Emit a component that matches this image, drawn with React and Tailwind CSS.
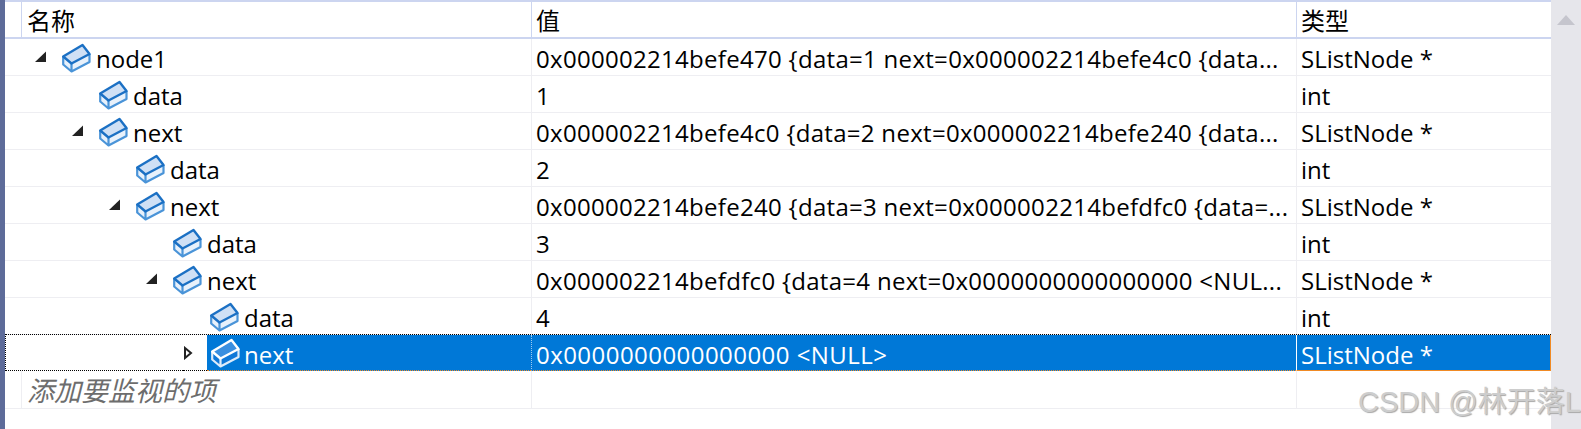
const rows = [
  { name: "node1", value: "0x000002214befe470 {data=1 next=0x000002214befe4c0 {data...", type: "SListNode *", indent: "pl-[29px]", arrow: "open" },
  { name: "data", value: "1", type: "int", indent: "pl-[66px]" },
  { name: "next", value: "0x000002214befe4c0 {data=2 next=0x000002214befe240 {data...", type: "SListNode *", indent: "pl-[66px]", arrow: "open" },
  { name: "data", value: "2", type: "int", indent: "pl-[103px]" },
  { name: "next", value: "0x000002214befe240 {data=3 next=0x000002214befdfc0 {data=...", type: "SListNode *", indent: "pl-[103px]", arrow: "open" },
  { name: "data", value: "3", type: "int", indent: "pl-[140px]" },
  { name: "next", value: "0x000002214befdfc0 {data=4 next=0x0000000000000000 <NUL...", type: "SListNode *", indent: "pl-[140px]", arrow: "open" },
  { name: "data", value: "4", type: "int", indent: "pl-[177px]" },
];

function Cube({ selected }) {
  const stroke = selected ? "#ffffff" : "#1b70c4";
  const light = selected ? "#dcebfa" : "#4a94d8";
  const top = selected ? "#3a8fe0" : "#cfe0f5";
  const side = selected ? "#0f78d8" : "#e8f1fb";
  return (
    <svg width="30" height="30" viewBox="0 0 30 30" className="shrink-0 -mt-[1px] overflow-visible">
      <path d="M2.2 14.5 L21.5 3 L28.5 12 L10.5 21.5 Z" fill={top} />
      <path d="M2.2 14.5 L10.5 21.5 L10.5 29.5 L2.2 22.5 Z" fill={side} />
      <path d="M10.5 21.5 L28.5 12 L28.5 20 L10.5 29.5 Z" fill={side} />
      <path d="M2.2 14.5 L2.2 22.5 L10.5 29.5 L28.5 20 L28.5 12 M10.5 21.5 L10.5 29.5" fill="none" stroke={light} strokeWidth="2.2" strokeLinejoin="round" />
      <path d="M2.2 14.5 L21.5 3 L28.5 12 L10.5 21.5 Z" fill="none" stroke={stroke} strokeWidth="2.4" strokeLinejoin="round" />
    </svg>
  );
}

function Arrow({ kind }) {
  if (kind === "open") {
    return (
      <svg width="13" height="12" viewBox="0 0 13 12" className="shrink-0">
        <path d="M1 11 L12 0.5 L12 11 Z" fill="#222222" />
      </svg>
    );
  }
  return (
    <svg width="10" height="14" viewBox="0 0 10 14" className="shrink-0">
      <path d="M2 2 L8 7 L2 12 Z" fill="#ffffff" stroke="#222222" strokeWidth="2" />
    </svg>
  );
}

function Row({ row }) {
  return (
    <div className="grid grid-cols-[526px_765px_255px] h-[37px] border-b border-[#eeeef2] text-[24px] leading-[28px] text-black">
      <div className={`flex items-center ${row.indent}`}>
        <span className="w-[27px] shrink-0 flex">{row.arrow && <Arrow kind={row.arrow} />}</span>
        <Cube />
        <span className="ml-[5px] pt-[4px]">{row.name}</span>
      </div>
      <div className="flex items-center pl-[4px] pt-[4px] border-l border-[#eeeef2] whitespace-nowrap overflow-hidden tracking-[0.3px]">{row.value}</div>
      <div className="flex items-center pl-[4px] pt-[4px] border-l border-[#eeeef2]">{row.type}</div>
    </div>
  );
}

export default function App() {
  return (
    <div className="relative w-[1581px] h-[429px] flex bg-white overflow-hidden font-['Open_Sans','Noto_Sans_CJK_SC',sans-serif]">
      <div className="w-[5px] shrink-0 bg-[#5d6b99]" />
      <div className="flex-1 min-w-0 flex flex-col">
        <div className="h-[2px] bg-[#ccd5f0]" />
        <div className="grid grid-cols-[526px_765px_255px] h-[37px] border-b-2 border-[#ccd5f0] text-[24px] leading-[30px] text-black font-['Noto_Sans_CJK_SC',sans-serif]">
          <div className="flex items-center pl-[5px] ml-[16px] border-l border-[#ccd5f0]">名称</div>
          <div className="flex items-center pl-[4px] border-l border-[#ccd5f0]">值</div>
          <div className="flex items-center pl-[4px] border-l border-[#ccd5f0]">类型</div>
        </div>
        {rows.map((r, i) => (
          <Row key={i} row={r} />
        ))}
        <div className="grid grid-cols-[525px_765px_255px] h-[37px] -mt-[1px] text-[24px] leading-[28px] border-t border-l border-black border-dotted">
          <div className="flex">
            <div className="w-[177px] shrink-0 border-b border-dotted border-black" />
            <div className="w-[24px] shrink-0 flex items-center border-b border-dotted border-black">
              <Arrow kind="closed" />
            </div>
            <div className="flex-1 flex items-center bg-[#0078d7] text-white border-b border-dotted border-[#f08a24] pl-[3px]">
              <Cube selected />
              <span className="ml-[4px] pt-[4px]">next</span>
            </div>
          </div>
          <div className="flex items-center pl-[4px] pt-[4px] bg-[#0078d7] text-white border-l border-l-[#9cc9ef] border-b border-dotted border-b-[#f08a24] tracking-[0.45px]">0x0000000000000000 &lt;NULL&gt;</div>
          <div className="flex items-center pl-[4px] pt-[4px] bg-[#0078d7] text-white border-l border-solid border-l-white border-b border-b-[#f08a24] border-r border-r-[#f08a24]">SListNode *</div>
        </div>
        <div className="grid grid-cols-[526px_765px_255px] h-[38px] border-b border-[#eeeef2]">
          <div className="flex items-center pl-[5px] ml-[16px] border-l border-[#eeeef2] italic text-[27px] leading-[34px] text-[#6d6d6d] font-['Noto_Sans_CJK_SC',sans-serif]">添加要监视的项</div>
          <div className="border-l border-[#eeeef2]" />
          <div className="border-l border-[#eeeef2]" />
        </div>
      </div>
      <div className="w-[30px] shrink-0 bg-[#e6e6eb] flex flex-col items-center pt-[15px]">
        <svg width="18" height="10" viewBox="0 0 18 10">
          <path d="M0 10 L9 0 L18 10 Z" fill="#c5c5cd" />
        </svg>
      </div>
      <div className="absolute left-[1358px] top-[383px] text-[29px] leading-[38px] text-[#cdcdcd] whitespace-nowrap [text-shadow:1px_1px_1px_#a8a8a8] font-['Liberation_Sans','Noto_Sans_CJK_SC',sans-serif]">CSDN @林开落L</div>
    </div>
  );
}
